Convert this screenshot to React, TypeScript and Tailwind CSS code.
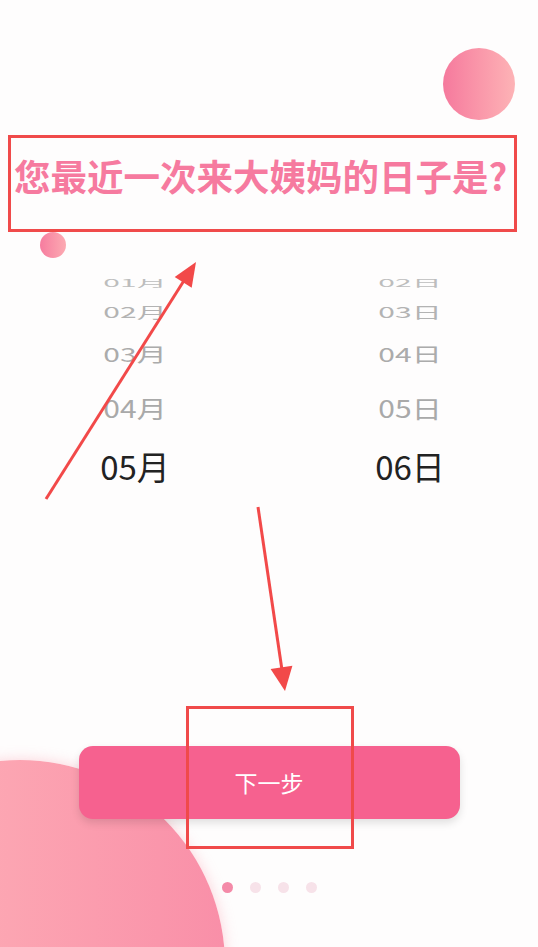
import React from "react"

const FONT = { fontFamily: '"Noto Sans CJK SC", "Noto Sans", sans-serif' }

// wheel rows: label, vertical squeeze, colour, top margin
const MONTHS = [
  { m: "01月", d: "02日", cls: "-mt-[12px] scale-y-[0.35] text-[#bdbdbd]" },
  { m: "02月", d: "03日", cls: "-mt-[1px] scale-y-[0.5] text-[#b3b3b3]" },
  { m: "03月", d: "04日", cls: "mt-[13px] scale-y-[0.64] text-[#ababab]" },
  { m: "04月", d: "05日", cls: "mt-[24px] scale-y-[0.8] text-[#a9a9a9]" },
]

function Wheel({ field, selected }: { field: "m" | "d"; selected: string }) {
  return (
    <div className="flex w-[150px] flex-col items-center">
      {MONTHS.map((r) => (
        <div key={r[field]} className={`h-[30px] text-[30px] leading-[30px] ${r.cls}`}>
          {r[field]}
        </div>
      ))}
      <div className="mt-[28px] h-[30px] text-[33px] leading-[30px] text-[#222222]">{selected}</div>
    </div>
  )
}

export default function App() {
  return (
    <div className="relative h-[947px] w-[538px] overflow-hidden bg-[#fefdfd]" style={FONT}>
      {/* background bubbles */}
      <div className="absolute left-[443px] top-[48px] h-[72px] w-[72px] rounded-full bg-gradient-to-r from-[#f5799d] to-[#fdb3b6]" />
      <div className="absolute left-[40px] top-[232px] h-[26px] w-[26px] rounded-full bg-gradient-to-r from-[#f67c9f] to-[#fcaab2]" />
      <div className="absolute left-[-185px] top-[760px] h-[410px] w-[410px] rounded-full bg-gradient-to-r from-[#feb8bb] to-[#f98fa8] shadow-[0_0_14px_rgba(250,160,175,0.45)]" />

      <div className="relative flex h-full flex-col items-center">
        <h1 className="mt-[156px] w-full whitespace-nowrap pl-[14px] text-[36.5px] font-bold leading-[40px] text-[#f67a9f]">
          您最近一次来大姨妈的日子是?
        </h1>

        <div className="mt-[83px] flex h-[221px] w-full overflow-hidden">
          <div className="ml-[60px] flex">
            <Wheel field="m" selected="05月" />
          </div>
          <div className="ml-[125px] flex">
            <Wheel field="d" selected="06日" />
          </div>
        </div>

        <button className="mt-[246px] flex h-[73px] w-[381px] items-center justify-center rounded-[14px] bg-[#f6618f] text-[23px] text-white shadow-[0_4px_8px_rgba(0,0,0,0.12)]">
          下一步
        </button>

        <div className="mt-[63px] flex gap-[17px]">
          <span className="h-[11px] w-[11px] rounded-full bg-[#f48aa8]" />
          <span className="h-[11px] w-[11px] rounded-full bg-[#f7e2e9]" />
          <span className="h-[11px] w-[11px] rounded-full bg-[#f7e2e9]" />
          <span className="h-[11px] w-[11px] rounded-full bg-[#f7e2e9]" />
        </div>
      </div>

      {/* annotation overlay */}
      <div className="absolute left-[8px] top-[135px] h-[97px] w-[509px] border-[3px] border-[#f04a4a]" />
      <div className="absolute left-[186px] top-[706px] h-[143px] w-[168px] border-[3px] border-[#f04a4a]" />
      <svg className="absolute inset-0" width="538" height="947" viewBox="0 0 538 947">
        <line x1="46" y1="499" x2="185" y2="279" stroke="#f24949" strokeWidth="3" />
        <polygon points="196,262 191.7,287.7 174.7,276.9" fill="#f24949" />
        <line x1="258" y1="507" x2="282" y2="670" stroke="#f24949" strokeWidth="3" />
        <polygon points="285,691 270.6,668.9 292.4,665.7" fill="#f24949" />
      </svg>
    </div>
  )
}
